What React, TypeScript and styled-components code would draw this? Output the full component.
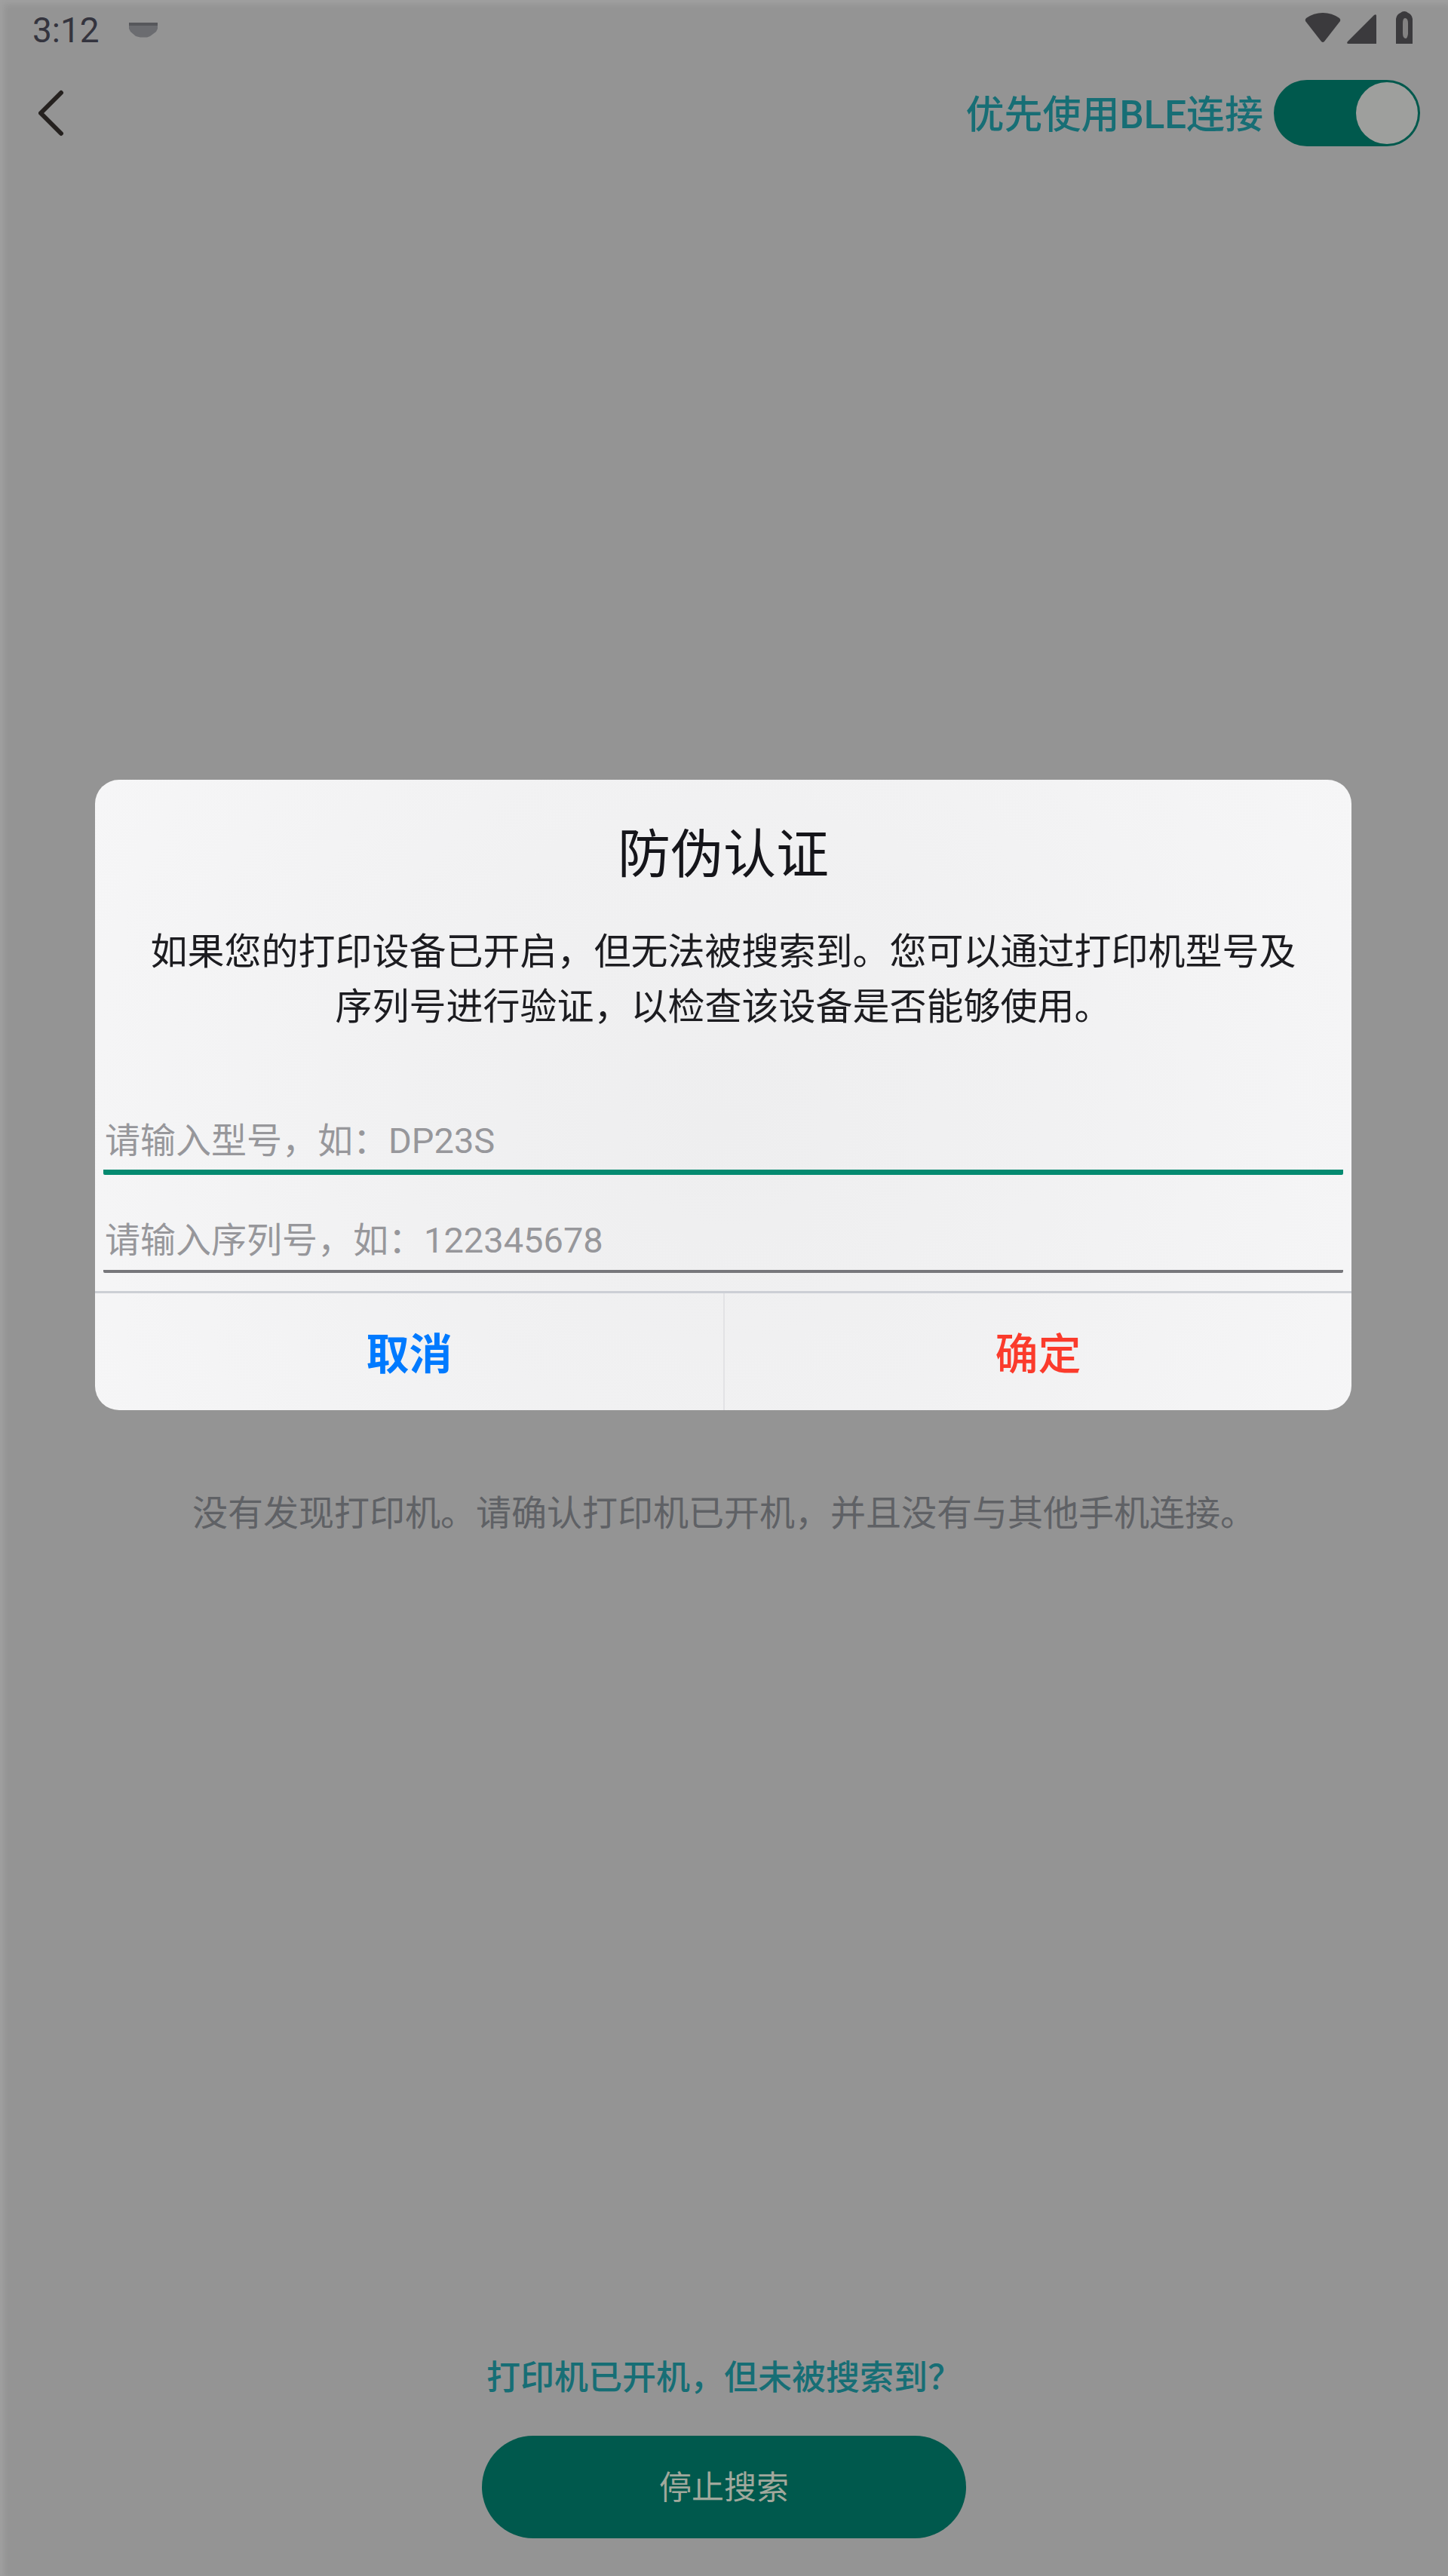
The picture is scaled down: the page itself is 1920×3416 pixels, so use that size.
import React from "react";
import styled, { createGlobalStyle } from "styled-components";

const color = {
  backdrop: "#949494",
  teal: "#00594d",
  link: "#176e75",
  muted: "#5f6165",
  knob: "#9e9f9d",
  accent: "#048a70",
};

const GlobalStyle = createGlobalStyle`
  *, *::before, *::after { box-sizing: border-box; }
  html, body, #root { height: 100%; }
  body {
    margin: 0;
    background: ${color.backdrop};
    font-family: Roboto, "Noto Sans CJK SC", sans-serif;
  }
  button, input { font-family: inherit; }
`;

const Screen = styled.div`
  position: relative;
  display: flex;
  flex-direction: column;
  min-height: 100vh;
  background: ${color.backdrop};
  box-shadow: inset 5px 5px 8px rgba(255, 255, 255, 0.12);
`;

const StatusBar = styled.div`
  display: flex;
  align-items: center;
  justify-content: space-between;
  height: 80px;
  padding: 0 46px 0 43px;
`;

const StatusGroup = styled.div`
  display: flex;
  align-items: center;
  gap: 38px;
`;

const SystemIcons = styled.div`
  display: flex;
  gap: 8px;
  padding-bottom: 6px;

  svg:last-child {
    margin-left: 16px;
  }
`;

const Clock = styled.time`
  font-size: 46px;
  line-height: 52px;
  color: #34343e;
`;

const NavBar = styled.header`
  display: flex;
  align-items: center;
  justify-content: space-between;
  height: 140px;
  padding: 0 37px 0 35px;
`;

const BackButton = styled.button`
  display: flex;
  padding: 16px;
  border: 0;
  background: none;
`;

const ToggleLabel = styled.label`
  display: flex;
  align-items: center;
  gap: 14px;
  font-size: 51px;
  font-weight: 500;
  line-height: 72px;
  color: ${color.link};
`;

const ToggleText = styled.span`
  padding-top: 6px;
`;

const Toggle = styled.input`
  appearance: none;
  display: flex;
  align-items: center;
  width: 194px;
  height: 88px;
  margin: 0;
  padding: 0 3px;
  border-radius: 44px;
  background: ${color.teal};

  &::before {
    content: "";
    width: 82px;
    height: 82px;
    border-radius: 50%;
    background: ${color.knob};
  }

  &:checked {
    justify-content: flex-end;
  }
`;

const Results = styled.main`
  display: flex;
  flex: 1;
  flex-direction: column;
  align-items: center;
`;

const Spacer = styled.div<{ $grow: number }>`
  flex: ${(p) => p.$grow} 0 0;
`;

const EmptyHint = styled.p`
  margin: 0;
  font-size: 47px;
  line-height: 72px;
  color: ${color.muted};
  text-align: center;
`;

const Footer = styled.footer`
  display: flex;
  flex-direction: column;
  align-items: center;
  gap: 40px;
  padding-bottom: 50px;
`;

const HelpLink = styled.a`
  font-size: 45px;
  font-weight: 500;
  line-height: 72px;
  color: ${color.link};
  text-decoration: none;
`;

const StopButton = styled.button`
  width: 642px;
  max-width: 90%;
  height: 136px;
  padding: 0 0 6px;
  border: 0;
  border-radius: 68px;
  background: ${color.teal};
  font-size: 43px;
  color: #a0a89c;
`;

const Overlay = styled.div`
  position: absolute;
  inset: 0;
  display: flex;
  align-items: center;
  justify-content: center;
  padding: 0 128px 512px 126px;
`;

const Dialog = styled.section`
  display: flex;
  flex-direction: column;
  width: 100%;
  border-radius: 32px;
  background: radial-gradient(circle at 50% 55%, #eeeeef 0%, #f1f1f2 45%, #f6f6f7 100%);
  overflow: hidden;
`;

const DialogTitle = styled.h2`
  margin: 0;
  padding-top: 48px;
  font-size: 70px;
  font-weight: 400;
  line-height: 104px;
  text-align: center;
  color: #15151a;
`;

const DialogText = styled.p`
  margin: 0;
  padding: 40px 64px 0;
  font-size: 49px;
  line-height: 73px;
  text-align: center;
  color: #1c1c20;
`;

const Fields = styled.form`
  display: flex;
  flex-direction: column;
  gap: 44px;
  padding: 100px 11px 24px;
`;

const Field = styled.input<{ $active?: boolean }>`
  width: 100%;
  height: 86px;
  padding: 2px 2px 0;
  border: 0;
  border-bottom: ${(p) => (p.$active ? `7px solid ${color.accent}` : "4px solid #77777b")};
  border-radius: 2px;
  outline: 0;
  background: none;
  font-size: 47px;
  color: #1c1c20;

  &::placeholder {
    color: #97979b;
    opacity: 1;
  }
`;

const Actions = styled.div`
  display: grid;
  grid-template-columns: 1fr 1fr;
  border-top: 3px solid #cccfd5;
`;

const Action = styled.button<{ $tone: string; $weight: number }>`
  height: 155px;
  padding: 0 0 4px;
  border: 0;
  background: none;
  font-size: 57px;
  font-weight: ${(p) => p.$weight};
  color: ${(p) => p.$tone};

  & + & {
    border-left: 2px solid #e2e2e5;
  }
`;

const NotificationIcon = () => (
  <svg width="40" height="22" viewBox="0 0 40 22" aria-hidden="true">
    <path d="M1 1h38v8l-2 4-8 6-4 1.500H16L10 19 3 13 1 9z" fill="#6b6c70" />
    <path d="M1 1h38v4H1z" fill="#56575b" />
  </svg>
);

const WifiIcon = () => (
  <svg width="48" height="46" viewBox="0 0 48 46" aria-hidden="true">
    <path d="M1 14Q0 12 2 10Q12 3 24 3T46 10Q48 12 47 14L26 41Q24 43 22 41Z" fill="#3b3a3d" />
  </svg>
);

const SignalIcon = () => (
  <svg width="40" height="46" viewBox="0 0 40 46" aria-hidden="true">
    <path d="M36 6Q39 4 39 7V44H2Q-1 44 1 41Z" fill="#3b3a3d" />
  </svg>
);

const BatteryIcon = () => (
  <svg width="24" height="46" viewBox="0 0 24 46" aria-hidden="true">
    <path d="M1 11Q2 5 7 3Q9 1 12 1T17 3Q22 5 23 11V44H1Z" fill="#3b3a3d" />
    <path d="M13 10Q17 10 17 17V31Q16 37 14 37Q10 37 10 30V17Q10 10 13 10Z" fill="#838282" />
  </svg>
);

const BackIcon = () => (
  <svg width="34" height="62" viewBox="0 0 34 62" fill="none" stroke="#25211f" strokeWidth="6" strokeLinecap="round" strokeLinejoin="round" aria-hidden="true">
    <path d="M30 4L3 31L30 58" />
  </svg>
);

export default function App() {
  return (
    <>
      <GlobalStyle />
      <Screen>
        <StatusBar>
          <StatusGroup>
            <Clock>3:12</Clock>
            <NotificationIcon />
          </StatusGroup>
          <SystemIcons>
            <WifiIcon />
            <SignalIcon />
            <BatteryIcon />
          </SystemIcons>
        </StatusBar>
        <NavBar>
          <BackButton aria-label="返回">
            <BackIcon />
          </BackButton>
          <ToggleLabel>
            <ToggleText>优先使用BLE连接</ToggleText>
            <Toggle type="checkbox" role="switch" defaultChecked />
          </ToggleLabel>
        </NavBar>
        <Results>
          <Spacer $grow={163} />
          <EmptyHint>没有发现打印机。请确认打印机已开机，并且没有与其他手机连接。</EmptyHint>
          <Spacer $grow={100} />
        </Results>
        <Footer>
          <HelpLink href="#help">打印机已开机，但未被搜索到？</HelpLink>
          <StopButton>停止搜索</StopButton>
        </Footer>
        <Overlay>
          <Dialog role="dialog" aria-modal="true" aria-labelledby="dialog-title">
            <DialogTitle id="dialog-title">防伪认证</DialogTitle>
            <DialogText>
              如果您的打印设备已开启，但无法被搜索到。您可以通过打印机型号及序列号进行验证，以检查该设备是否能够使用。
            </DialogText>
            <Fields id="verify-form">
              <Field $active aria-label="型号" placeholder="请输入型号，如：DP23S" />
              <Field aria-label="序列号" placeholder="请输入序列号，如：122345678" />
            </Fields>
            <Actions>
              <Action type="button" $tone="#007aff" $weight={700}>取消</Action>
              <Action type="submit" form="verify-form" $tone="#fb3b2c" $weight={500}>确定</Action>
            </Actions>
          </Dialog>
        </Overlay>
      </Screen>
    </>
  );
}
